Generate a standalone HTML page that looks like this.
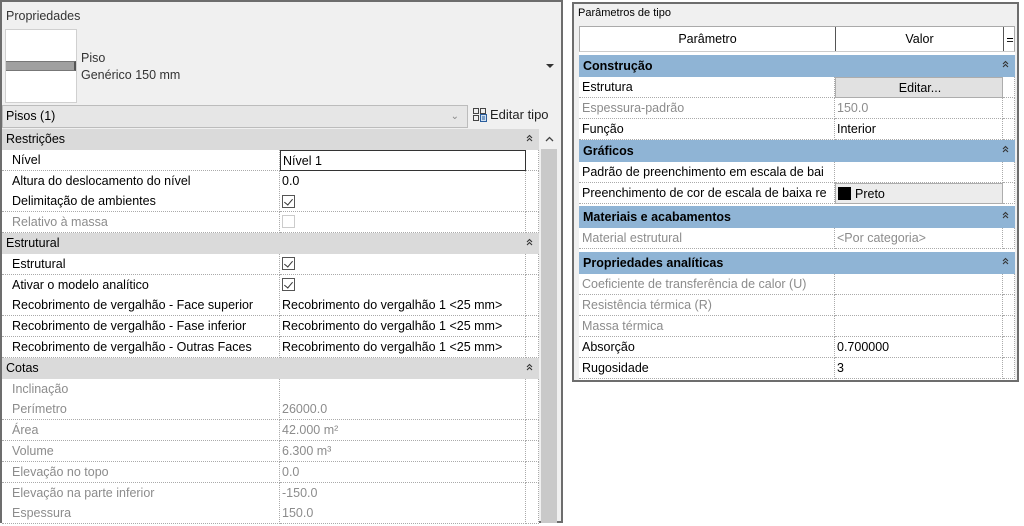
<!DOCTYPE html>
<html><head><meta charset="utf-8"><style>
*{box-sizing:border-box;margin:0;padding:0}
body{width:1024px;height:526px;background:#fff;font-family:"Liberation Sans",sans-serif;font-size:12.5px;color:#000;position:relative;overflow:hidden}
.abs{position:absolute}
#L{left:0;top:0;width:563px;height:523px;border:2px solid #6d6d6d;background:#f0f0f0}
#R{left:572px;top:2px;width:447px;height:380px;border:2px solid #6d6d6d;background:#f0f0f0}
.row{position:absolute;left:0;height:21px;line-height:21px;white-space:nowrap;overflow:hidden}
.hdr{background:#dadada;padding-left:4px}
.lab{position:absolute;left:0;top:0;height:21px;background:#fff;border-bottom:1px dotted #aaa;border-right:1px dotted #aaa}
.val{position:absolute;top:0;height:21px;background:#fff;border-bottom:1px dotted #aaa;border-right:1px dotted #aaa;padding-left:2px}
.g{color:#8c8c8c}
.chev{position:absolute;right:6px;top:5px;width:7px;height:8px}
.cb{display:inline-block;width:13px;height:13px;border:1px solid #555;vertical-align:middle;margin-top:-2px;position:relative}
.cb.ck::after{content:"";position:absolute;left:3px;top:1px;width:4px;height:7px;border:solid #333;border-width:0 1.4px 1.4px 0;transform:rotate(40deg)}
.bh{background:#8fb4d5;font-weight:bold;padding-left:4px}
</style></head><body>
<div id="L" class="abs">
 <div class="abs" style="left:4px;top:7px;color:#333">Propriedades</div>
 <div class="abs" style="left:3px;top:27px;width:72px;height:74px;background:#fff;border:1px solid #d0d0d0"></div>
 <div class="abs" style="left:4px;top:59px;width:70px;height:10px;background:#a0a0a0;border-top:1px solid #777;border-bottom:1px solid #777;border-right:2px solid #555"></div>
 <div class="abs" style="left:79px;top:49px;color:#333">Piso</div>
 <div class="abs" style="left:79px;top:66px;color:#333">Genérico 150 mm</div>
 <div class="abs" style="left:544px;top:62px;width:0;height:0;border-left:4px solid transparent;border-right:4px solid transparent;border-top:4px solid #333"></div>
 <div class="abs" style="left:0;top:103px;width:466px;height:23px;background:#e6e6e6;border:1px solid #bcbcbc;line-height:21px;padding-left:3px">Pisos (1)<span style="position:absolute;right:8px;top:0;color:#888;font-size:10px">&#8964;</span></div>
 <svg class="abs" style="left:470px;top:105px" width="16" height="16" viewBox="0 0 16 16" fill="none" stroke="#444" stroke-width="1"><rect x="1.5" y="1.5" width="5" height="5"/><rect x="8.5" y="1.5" width="5" height="5"/><rect x="1.5" y="8.5" width="5" height="5"/><rect x="8.5" y="7.5" width="6" height="7" fill="#cfe0f0" stroke="#2a5d9c"/><line x1="10" y1="10" x2="13" y2="10" stroke="#2a5d9c"/><line x1="10" y1="12" x2="13" y2="12" stroke="#2a5d9c"/></svg>
 <div class="abs" style="left:488px;top:105px;font-size:13px;color:#222">Editar tipo</div>
 <div class="abs" style="left:539px;top:147px;width:16px;height:374px;background:#c9c9c9"></div>
 <svg class="abs" style="left:543px;top:134px" width="9" height="6" viewBox="0 0 9 6"><path d="M1 5L4.5 1.5L8 5" fill="none" stroke="#444" stroke-width="1.3"/></svg>
 <div id="Lt" class="abs" style="left:0;top:127px;width:537px"></div>
</div>
<div id="R" class="abs">
 <div class="abs" style="left:4px;top:3px;font-size:11px">Parâmetros de tipo</div>
 <div class="abs" style="left:5px;top:22px;width:436px;height:26px;background:#fff;border:1px solid #aaa;border-bottom:1px solid #ccc">
  <div class="abs" style="left:0;top:0;width:256px;height:24px;border-right:1px solid #555;text-align:center;line-height:24px">Parâmetro</div>
  <div class="abs" style="left:256px;top:0;width:168px;height:24px;border-right:1px solid #555;text-align:center;line-height:24px">Valor</div>
  <div class="abs" style="left:426px;top:0;width:8px;height:24px;text-align:center;line-height:26px">=</div>
 </div>
 <div id="Rt" class="abs" style="left:5px;top:48px;width:436px;height:328px;background:#fff"></div>
</div>
<script>
var CH='<svg class="chev" viewBox="0 0 7 8"><path d="M1 4L3.5 1.5L6 4M1 7L3.5 4.5L6 7" fill="none" stroke="#333" stroke-width="1.1"/></svg>';
var L=[["h","Restrições"],["r","Nível","Nível 1",0,"box"],["r","Altura do deslocamento do nível","0.0"],["r","Delimitação de ambientes","ck"],["r","Relativo à massa","cbg",1],["h","Estrutural"],["r","Estrutural","ck"],["r","Ativar o modelo analítico","ck"],["r","Recobrimento de vergalhão - Face superior","Recobrimento do vergalhão 1 <25 mm>"],["r","Recobrimento de vergalhão - Fase inferior","Recobrimento do vergalhão 1 <25 mm>"],["r","Recobrimento de vergalhão - Outras Faces","Recobrimento do vergalhão 1 <25 mm>"],["h","Cotas"],["r","Inclinação","",1],["r","Perímetro","26000.0",1],["r","Área","42.000 m²",1],["r","Volume","6.300 m³",1],["r","Elevação no topo","0.0",1],["r","Elevação na parte inferior","-150.0",1],["r","Espessura","150.0",1]];
var h="",y=0;
L.forEach(function(r){
 if(r[0]=="h"){h+='<div class="row hdr" style="top:'+y+'px;width:537px">'+r[1]+CH+'</div>';}
 else{var v=r[2];if(v=="ck")v='<span class="cb ck"></span>';else if(v=="cbg")v='<span class="cb" style="border-color:#ccc"></span>';
 else v=v.replace("<","&lt;").replace(">","&gt;");
 var bx=r[4]?'border:1.5px solid #333;':'';
 h+='<div class="row" style="top:'+y+'px;width:537px"><div class="lab'+(r[3]?' g':'')+'" style="width:278px;padding-left:10px">'+r[1]+'</div><div class="val'+(r[3]?' g':'')+'" style="left:278px;width:246px;'+bx+'">'+v+'</div><div class="val" style="left:524px;width:13px"></div></div>';}
 y+=20.8;});
document.getElementById("Lt").innerHTML=h;
var R=[["h","Construção",3],["r","Estrutura","btn"],["r","Espessura-padrão","150.0",1],["r","Função","Interior"],["h","Gráficos",88],["r","Padrão de preenchimento em escala de bai",""],["r","Preenchimento de cor de escala de baixa re","preto"],["h","Materiais e acabamentos",154],["r","Material estrutural","&lt;Por categoria&gt;",1],["h","Propriedades analíticas",200],["r","Coeficiente de transferência de calor (U)","",1],["r","Resistência térmica (R)","",1],["r","Massa térmica","",1],["r","Absorção","0.700000"],["r","Rugosidade","3"]];
h="";y=0;
R.forEach(function(r){
 if(r[0]=="h"){y=r[2];h+='<div class="row bh" style="top:'+y+'px;width:436px;height:22px;line-height:22px">'+r[1]+CH+'</div>';y+=22;}
 else{var v=r[2];var st='';
 if(v=="btn"){v='Editar...';st='text-align:center;background:#e1e1e1;border:1px solid #adadad;';}
 if(v=="preto"){v='<span style="display:inline-block;width:13px;height:13px;background:#000;vertical-align:middle;margin:-2px 4px 0 0"></span>Preto';st='background:#ececec;border:1px solid #adadad;';}
 h+='<div class="row" style="top:'+y+'px;width:436px"><div class="lab'+(r[3]?' g':'')+'" style="width:256px;padding-left:3px">'+r[1]+'</div><div class="val'+(r[3]?' g':'')+'" style="left:256px;width:168px;'+st+'">'+v+'</div><div class="val" style="left:424px;width:12px"></div></div>';y+=21;}});
document.getElementById("Rt").innerHTML=h;
</script>
</body></html>
